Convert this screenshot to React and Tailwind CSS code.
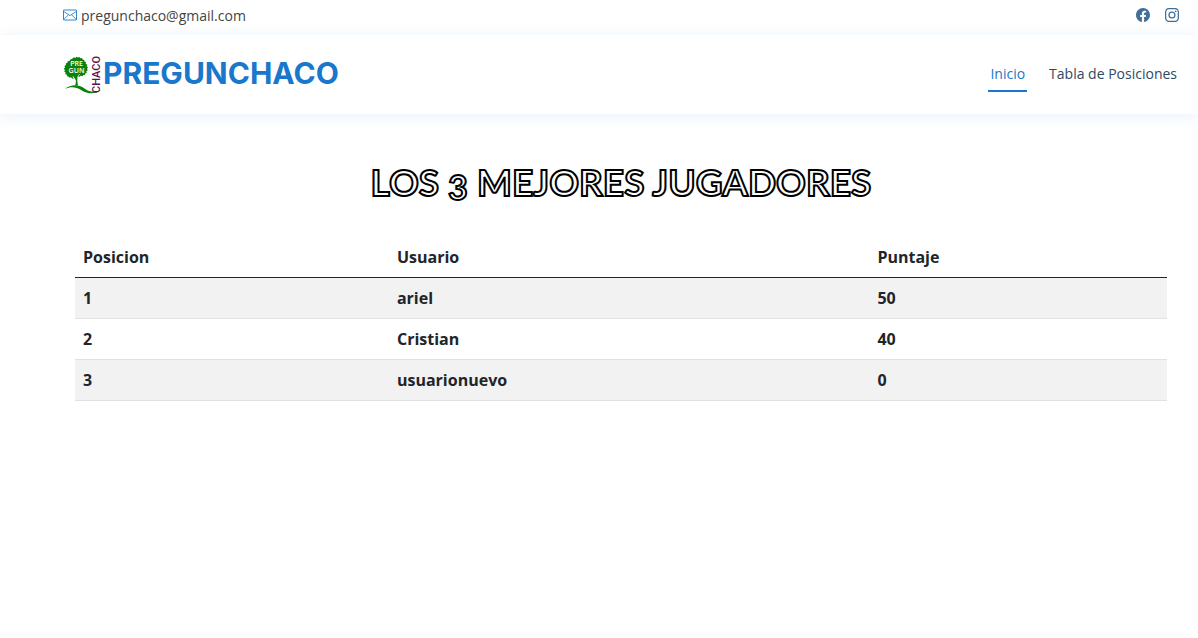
import { BsFacebook, BsInstagram } from "react-icons/bs";

const players = [
  { position: 1, user: "ariel", score: 50 },
  { position: 2, user: "Cristian", score: 40 },
  { position: 3, user: "usuarionuevo", score: 0 },
];

function EnvelopeIcon() {
  return (
    <svg viewBox="0 0 14 12" className="mb-0.5 h-3 w-3.5 shrink-0" fill="none" stroke="#1977cc" aria-hidden="true">
      <rect x="0.5" y="1" width="13" height="10" rx="0.3" strokeWidth="0.9" />
      <path d="M0.7 2.5 7 6.6l6.3-4.1M0.8 10.4l4.6-4.6M13.2 10.4 8.6 5.8" strokeWidth="0.8" />
    </svg>
  );
}

function TreeLogo() {
  return (
    <svg viewBox="0 0 40 40" className="size-10 shrink-0" role="img" aria-label="Pregunchaco">
      <g fill="#0b820b">
        <path d="M9.500 3.500 11 2.200l1.300.7L13.500 1.700l1.300.8 1.700-.6.8 1.300 1.800-.1.500 1.500 1.700.3v1.500l1.700.7-.3 1.600 1.600 1-.6 1.400 1.300 1.300-1 1.300.8 1.600-1.400 1 .3 1.600-1.600.6-.2 1.500-1.700.1-.8 1.200-1.600-.5-1.200.9-1.500-.2 1.800-2.300-.6-.3-1.800 2.700-.2 4c.1 1.700.3 3.100.9 4.800h-3.200c.8-1.700 1-3.400.8-5.200l-2.500-4-.7.300 1 2.200-1.500-.3-1.100-1.100-1.500.4-.9-1.300-1.600-.1-.1-1.600-1.600-.6.3-1.600-1.400-1 .7-1.500-1.100-1.300 1.200-1.200-.5-1.600 1.400-.9-.1-1.600 1.600-.6.300-1.600 1.700-.1.700-1.400Z" />
        <path d="M2 34c6-5 13.500-4.800 19.500-.6 5.300 3.600 10.500 4.400 16.500 1.300-6 4.900-13.200 4.300-19.200.7C13 32 8 31.300 2 34Z" />
      </g>
      <g fontFamily="Open Sans, sans-serif" fontWeight="600">
        <text x="13.5" y="11" fontSize="7" textAnchor="middle" fill="#fff">PRE</text>
        <text x="13.5" y="18" fontSize="7" textAnchor="middle" fill="#fff">GUN</text>
        <text transform="translate(36.5 38) rotate(-90)" fontSize="11" fontFamily="Roboto, sans-serif" fontWeight="500" fill="#5b0f4b">CHACO</text>
      </g>
    </svg>
  );
}

export default function App() {
  return (
    <div className="min-h-screen bg-white font-['Open_Sans',sans-serif] text-[#444444]">
      <div className="flex h-[35px] items-center justify-between pr-[19px] pb-1 pl-[63px]">
        <a href="mailto:pregunchaco@gmail.com" className="flex items-center gap-1 text-sm">
          <EnvelopeIcon />
          pregunchaco@gmail.com
        </a>
        <div className="flex items-center gap-[15px] pb-0.5 text-sm text-[#437099]">
          <a href="#facebook" aria-label="Facebook"><BsFacebook /></a>
          <a href="#instagram" aria-label="Instagram"><BsInstagram /></a>
        </div>
      </div>

      <header className="flex h-[79px] items-center justify-between bg-white pr-[19px] pl-[63px] shadow-[0_2px_15px_rgba(25,119,204,0.1)]">
        <a href="#inicio" className="flex items-center font-['Inter',sans-serif] text-[30px] leading-9 font-bold text-[#1977cc]">
          <TreeLogo />
          <span className="pb-1">PREGUNCHACO</span>
        </a>
        <nav className="flex items-center gap-5 pb-0.5 text-sm text-[#2c4964]">
          <a href="#inicio" className="border-b-2 border-[#1977cc] px-0.5 pt-2 pb-1.5 text-[#1977cc]">Inicio</a>
          <a href="#tabla" className="border-b-2 border-transparent px-0.5 pt-2 pb-1.5">Tabla de Posiciones</a>
        </nav>
      </header>

      <main className="pt-12 pr-[31px] pl-[75px]">
        <h1 className="mb-[35px] text-center font-['Lato',sans-serif] text-[37px] leading-10 font-bold text-white oldstyle-nums [-webkit-text-stroke:2px_#000]">
          LOS 3 MEJORES JUGADORES
        </h1>
        <table className="w-full table-fixed border-collapse text-left text-base font-bold text-[#212529]">
          <colgroup>
            <col className="w-[28.75%]" />
            <col className="w-[44%]" />
            <col />
          </colgroup>
          <thead>
            <tr className="border-b border-[#212529]">
              <th scope="col" className="p-2">Posicion</th>
              <th scope="col" className="p-2">Usuario</th>
              <th scope="col" className="p-2">Puntaje</th>
            </tr>
          </thead>
          <tbody>
            {players.map((player) => (
              <tr key={player.position} className="border-b border-[#dee2e6] odd:bg-[#f2f2f2]">
                <th scope="row" className="p-2">{player.position}</th>
                <td className="p-2">{player.user}</td>
                <td className="p-2">{player.score}</td>
              </tr>
            ))}
          </tbody>
        </table>
      </main>
    </div>
  );
}
